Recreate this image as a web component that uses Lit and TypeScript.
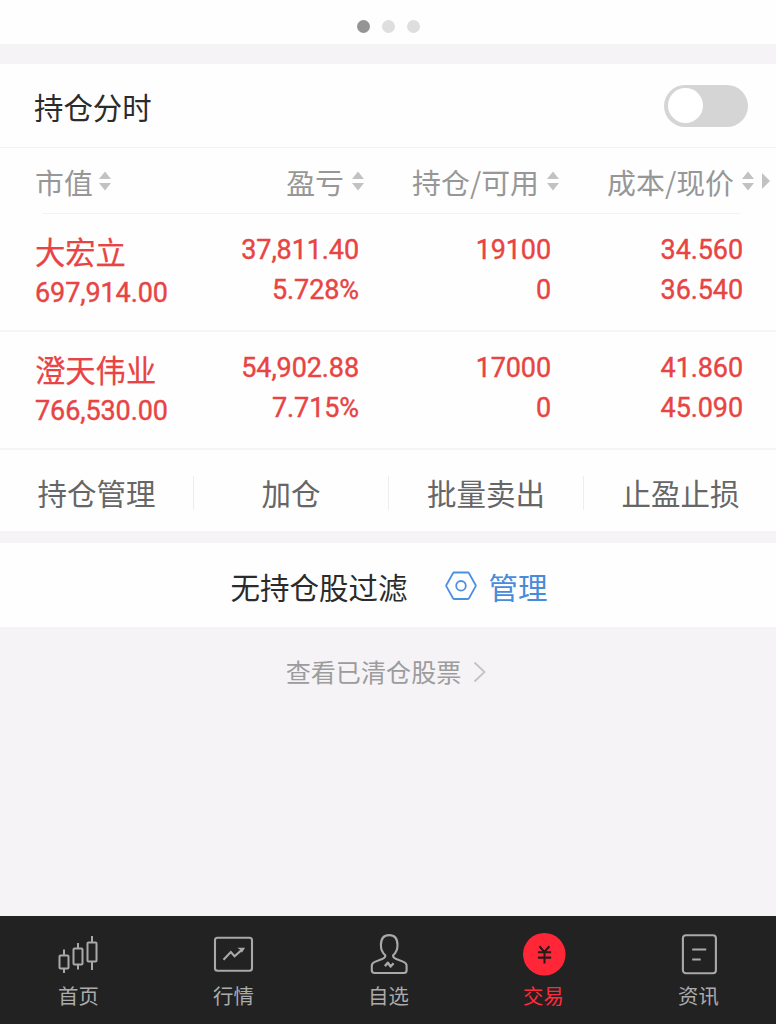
import { LitElement, html, css, svg } from "lit";
import { customElement, property } from "lit/decorators.js";
import { classMap } from "lit/directives/class-map.js";

interface Holding {
  name: string;
  value: string;
  profit: string;
  rate: string;
  held: string;
  usable: string;
  cost: string;
  price: string;
}

const HOLDINGS: Holding[] = [
  { name: "大宏立", value: "697,914.00", profit: "37,811.40", rate: "5.728%", held: "19100", usable: "0", cost: "34.560", price: "36.540" },
  { name: "澄天伟业", value: "766,530.00", profit: "54,902.88", rate: "7.715%", held: "17000", usable: "0", cost: "41.860", price: "45.090" },
];

const COLUMNS = ["市值", "盈亏", "持仓/可用", "成本/现价"];
const ACTIONS = ["持仓管理", "加仓", "批量卖出", "止盈止损"];

const TABS = [
  {
    label: "首页",
    icon: svg`<g fill="none" stroke="#a9a9a9" stroke-width="2">
      <rect x="2.5" y="22.5" width="9" height="13" rx="1"/><path d="M7 16.500v6M7 35.500v4.500"/>
      <rect x="16.500" y="15.500" width="9" height="16" rx="1"/><path d="M21 10v5.500M21 31.500v5"/>
      <rect x="30.500" y="9.500" width="9" height="19" rx="1"/><path d="M35 3v6.500M35 28.500v8.500"/></g>`,
  },
  {
    label: "行情",
    icon: svg`<g fill="none" stroke="#a9a9a9" stroke-width="2.100">
      <rect x="3" y="4.700" width="37" height="33" rx="2.500"/>
      <path d="M11.500 26.700L18.800 19L22.600 23.200L30.300 16.400"/></g>
      <path d="M25.300 14.700h7.800l-3.200 5-1.400-2.600z" fill="#a9a9a9"/>`,
  },
  {
    label: "自选",
    icon: svg`<g fill="none" stroke="#a9a9a9" stroke-width="2.100" stroke-linejoin="round" transform="translate(0.300 0.700)">
      <path d="M18 21.500C15.200 19.200 13.600 16 13.600 11.500C13.600 5 16.800 1.400 21.900 1.400S30.200 5 30.200 11.500C30.200 16 28.600 19.200 25.800 21.500C25.600 24 26.800 24.400 28.300 25L36.300 28.200Q39.300 29.500 39.300 32V36.500Q39.300 39.300 36.500 39.300H7.300Q4.500 39.300 4.500 36.500V32Q4.500 29.500 7.500 28.200L15.500 25C17 24.400 18.200 24 18 21.500Z"/>
      <path d="M17.600 32.400L20.500 29L23.300 32.800L26.300 29.600" stroke-width="2.400"/></g>`,
  },
  {
    label: "交易",
    icon: svg`<circle cx="22.300" cy="21.300" r="21.300" fill="#ff2638"/>
      <path d="M17.400 13.300L22.400 19L27.400 13.300M15.900 19.300h13.200M15.900 24.600h13.200M22.500 19v11.500" fill="none" stroke="#2a1a1b" stroke-width="2.100"/>`,
  },
  {
    label: "资讯",
    icon: svg`<g fill="none" stroke="#a9a9a9" stroke-width="2.100">
      <rect x="5.900" y="2.200" width="33" height="38" rx="3"/>
      <path d="M15.200 16.500h14M15.200 26.500h8.500"/></g>`,
  },
];

@customElement("sort-arrows")
class SortArrows extends LitElement {
  static styles = css`
    :host { display: block; width: 12px; height: 20px; }
    svg { display: block; }
  `;
  render() {
    return html`<svg width="12" height="20" viewBox="0 0 12 20">
      <path d="M6 0.500L12 8H0zM6 19.500L12 12H0z" fill="#c2c2c2" />
    </svg>`;
  }
}

@customElement("holding-row")
class HoldingRow extends LitElement {
  @property({ attribute: false }) item!: Holding;

  static styles = css`
    :host {
      display: grid;
      grid-template-columns: 134px 190px 192px 192px;
      box-sizing: border-box;
      height: 118px;
      padding: 16px 0 0 35px;
      border-bottom: 2px solid #f6f4f5;
      color: #e84443;
      font: 400 27px/40px Roboto, "Noto Sans CJK SC", sans-serif;
      letter-spacing: -0.100px;
      -webkit-text-stroke: 0.400px #e84443;
      white-space: nowrap;
    }
    .name {
      font: 400 30.300px/43px "Noto Sans CJK SC", sans-serif;
      letter-spacing: 0;
      -webkit-text-stroke-width: 0.250px;
    }
    .num { text-align: right; }
  `;
  render() {
    const h = this.item;
    return html`
      <div><div class="name">${h.name}</div><div>${h.value}</div></div>
      <div class="num"><div>${h.profit}</div><div>${h.rate}</div></div>
      <div class="num"><div>${h.held}</div><div>${h.usable}</div></div>
      <div class="num"><div>${h.cost}</div><div>${h.price}</div></div>
    `;
  }
}

@customElement("app-root")
class AppRoot extends LitElement {
  static styles = css`
    :host {
      display: flex;
      flex-direction: column;
      height: 1024px;
      overflow: hidden;
      background: #f5f3f5;
      font-family: "Noto Sans CJK SC", sans-serif;
      white-space: nowrap;
    }
    .dots {
      display: flex;
      justify-content: center;
      align-items: center;
      gap: 12px;
      height: 44px;
      padding: 9px 0 0 1px;
      box-sizing: border-box;
      background: #fefefe;
    }
    .dot { width: 13px; height: 13px; border-radius: 50%; background: #dedede; }
    .dot.on { background: #949494; }
    .panel { margin-top: 20px; background: #fefefe; }
    .title {
      display: flex;
      justify-content: space-between;
      align-items: center;
      box-sizing: border-box;
      height: 84px;
      padding: 0 28px 0 34px;
      border-bottom: 1px solid #f1f1f1;
      font-size: 29.400px;
      line-height: 42px;
      color: #2b2b2b;
    }
    .switch {
      box-sizing: border-box;
      width: 84px;
      height: 42px;
      padding: 3.500px;
      border-radius: 21px;
      background: #d5d5d5;
    }
    .knob { width: 35px; height: 35px; border-radius: 50%; background: #fff; }
    .head {
      display: grid;
      grid-template-columns: 134px 195px 195px 195px 16px;
      align-items: center;
      height: 65px;
      padding-left: 35px;
      font-size: 28.900px;
      line-height: 40px;
      color: #979797;
    }
    .col { display: flex; align-items: center; justify-content: flex-end; gap: 8px; }
    .col:first-child { justify-content: flex-start; gap: 6px; }
    .more { display: block; margin-left: 8px; }
    .rule { height: 1px; margin: 0 36px 0 42px; background: #f3f3f3; }
    .actions {
      display: grid;
      grid-template-columns: 194px 195px 195px 193px;
      align-items: center;
      box-sizing: border-box;
      width: 776px;
      height: 81px;
    }
    .action {
      border-right: 1px solid #eeeeee;
      height: 34px;
      line-height: 32px;
      margin-top: 5px;
      text-align: center;
      font-size: 29.500px;
      color: #666;
    }
    .action:last-child { border-right: 0; }
    .filter {
      display: flex;
      justify-content: center;
      align-items: center;
      box-sizing: border-box;
      height: 84px;
      margin-top: 12px;
      padding: 1px 0 0 2px;
      background: #fefefe;
      font-size: 29.500px;
      color: #2b2b2b;
    }
    .filter svg { margin: 0 12px 0 37px; }
    .link { color: #478bdb; }
    .cleared {
      display: flex;
      flex: 1;
      justify-content: center;
      align-items: flex-start;
      gap: 12px;
      padding: 25px 4px 0 0;
      font-size: 25.100px;
      line-height: 38px;
      color: #9d9c9d;
    }
    .cleared svg { margin-top: 9px; }
    .tabs {
      display: grid;
      grid-template-columns: repeat(5, 1fr);
      box-sizing: border-box;
      height: 108px;
      padding-left: 1px;
      background: #222;
    }
    .tab {
      display: flex;
      flex-direction: column;
      align-items: center;
      padding-top: 17px;
      font-size: 20.400px;
      line-height: 30px;
      color: #ababab;
    }
    .tab.on { color: #ff2b3c; }
    .tab svg { margin-bottom: 4px; overflow: visible; }
  `;

  render() {
    return html`
      <div class="dots">
        ${[0, 1, 2].map((i) => html`<span class=${classMap({ dot: true, on: i === 0 })}></span>`)}
      </div>
      <section class="panel">
        <div class="title">
          <span>持仓分时</span>
          <div class="switch"><div class="knob"></div></div>
        </div>
        <div class="head">
          ${COLUMNS.map((c) => html`<div class="col"><span>${c}</span><sort-arrows></sort-arrows></div>`)}
          <svg class="more" width="9" height="16" viewBox="0 0 9 16"><path d="M0 0L8 8L0 16z" fill="#c2c2c2" /></svg>
        </div>
        <div class="rule"></div>
        ${HOLDINGS.map((h) => html`<holding-row .item=${h}></holding-row>`)}
        <div class="actions">${ACTIONS.map((a) => html`<div class="action">${a}</div>`)}</div>
      </section>
      <div class="filter">
        <span>无持仓股过滤</span>
        <svg width="32" height="30" viewBox="0 0 32 30" fill="none" stroke="#4c90e2" stroke-width="1.800">
          <path d="M9 1.500H23Q23.600 1.500 24 2.200L30.600 14Q31 14.700 30.600 15.400L24 27.300Q23.600 28 23 28H9Q8.400 28 8 27.300L1.400 15.400Q1 14.700 1.400 14L8 2.200Q8.400 1.500 9 1.500Z" />
          <circle cx="16" cy="14.800" r="4.800" />
        </svg>
        <span class="link">管理</span>
      </div>
      <div class="cleared">
        <span>查看已清仓股票</span>
        <svg width="13" height="22" viewBox="0 0 13 22" fill="none" stroke="#c4c3c4" stroke-width="1.800"><path d="M1.500 1.500L11.500 11L1.500 20.500" /></svg>
      </div>
      <nav class="tabs">
        ${TABS.map((t) => html`<div class=${classMap({ tab: true, on: t.label === "交易" })}>
          <svg width="43" height="43" viewBox="0 0 43 43">${t.icon}</svg>
          <span>${t.label}</span>
        </div>`)}
      </nav>
    `;
  }
}
